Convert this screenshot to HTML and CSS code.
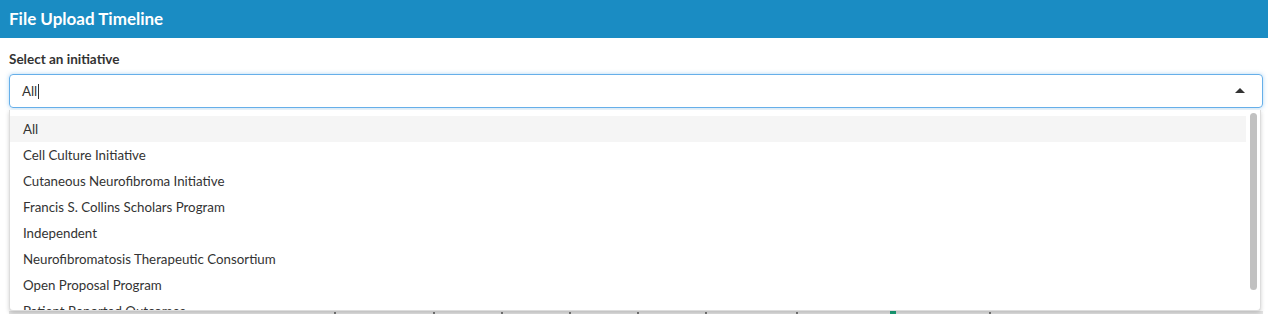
FILE: index.html
```html
<!DOCTYPE html>
<html lang="en">
<head>
  <meta charset="UTF-8">
  <title>File Upload Timeline</title>
  <link rel="stylesheet" href="styles.css">
</head>
<body>

<header class="box-header">
  <h3>File Upload Timeline</h3>
</header>

<section class="box-body">
  <label class="control-label">Select an initiative</label>
  <div class="selectize">
    <div class="selectize-input">
      <span>All</span><span class="caret-line"></span>
      <span class="arrow"></span>
    </div>
    <div class="selectize-dropdown">
      <div class="option active">All</div>
      <div class="option">Cell Culture Initiative</div>
      <div class="option">Cutaneous Neurofibroma Initiative</div>
      <div class="option">Francis S. Collins Scholars Program</div>
      <div class="option">Independent</div>
      <div class="option">Neurofibromatosis Therapeutic Consortium</div>
      <div class="option">Open Proposal Program</div>
      <div class="option">Patient Reported Outcomes</div>
      <div class="option">Synodos</div>
      <div class="scroll-thumb"></div>
    </div>
  </div>
  <div class="chart">
    <div class="axis">
      <span class="tick" style="left: 325px"></span>
      <span class="tick" style="left: 424px"></span>
      <span class="tick" style="left: 492px"></span>
      <span class="tick" style="left: 560px"></span>
      <span class="tick" style="left: 628px"></span>
      <span class="tick" style="left: 696px"></span>
      <span class="tick" style="left: 787px"></span>
      <span class="mark" style="left: 881px"></span>
      <span class="tick" style="left: 980px"></span>
    </div>
  </div>
</section>

</body>
</html>
```

FILE: styles.css
```css
body {
  margin: 0;
  font-family: Lato, "Liberation Sans", sans-serif;
  color: #333;
  background: #fff;
}
.box-header {
  background: #1a8cc3;
  color: #fff;
  height: 38px;
  padding: 0 9px;
  display: flex;
  align-items: center;
}
.box-header h3 {
  margin: 0 0 2px;
  font-size: 17px;
  font-weight: 700;
}
.box-body {
  padding: 13px 5px 0 9px;
}
.control-label {
  display: block;
  font-size: 13.5px;
  font-weight: 700;
  color: #333;
  margin-bottom: 7px;
}
.selectize {
  position: relative;
}
.selectize-input {
  height: 34px;
  box-sizing: border-box;
  border: 1px solid #66afe9;
  border-radius: 4px;
  box-shadow: 0 0 4px rgba(102, 175, 233, 0.5);
  padding: 0 12px;
  display: flex;
  align-items: center;
  font-size: 13.3px;
  color: #333;
  position: relative;
}
.caret-line {
  display: inline-block;
  width: 1px;
  height: 15px;
  background: #333;
  margin-left: 1px;
}
.arrow {
  position: absolute;
  right: 17px;
  top: 13px;
  width: 0;
  height: 0;
  border-left: 5px solid transparent;
  border-right: 5px solid transparent;
  border-bottom: 5px solid #333;
}
.selectize-dropdown {
  position: absolute;
  top: 36px;
  left: 0;
  right: 2px;
  height: 201px;
  box-sizing: border-box;
  border: 1px solid #ddd;
  border-top: 0;
  border-radius: 0 0 4px 4px;
  background: #fff;
  box-shadow: 0 2px 4px rgba(0, 0, 0, 0.18);
  overflow: hidden;
  padding-top: 6px;
  z-index: 2;
}
.option {
  height: 26px;
  line-height: 26px;
  padding: 0 13px;
  font-size: 13.3px;
  color: #333;
  margin-right: 14px;
}
.option.active {
  background: #f5f5f5;
}
.scroll-thumb {
  position: absolute;
  right: 3px;
  top: 3px;
  width: 7px;
  height: 177px;
  border-radius: 4px;
  background: #c1c1c1;
}
.chart {
  height: 220px;
}
.axis {
  position: relative;
  margin-top: 203px;
  height: 4px;
  background: #e4e4e4;
}
.tick {
  position: absolute;
  top: 1px;
  width: 2px;
  height: 3px;
  background: #777;
}
.mark {
  position: absolute;
  top: 0;
  width: 6px;
  height: 4px;
  background: #1aa37a;
}
```
